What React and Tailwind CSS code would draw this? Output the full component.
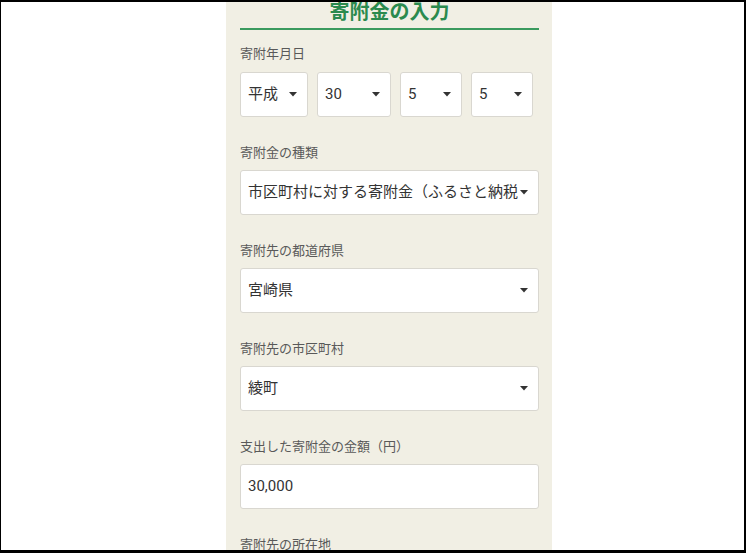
import React from 'react';

const font = { fontFamily: 'Roboto, "Noto Sans CJK JP", sans-serif' };

const Caret = () => (
  <svg width="8" height="5" viewBox="0 0 8 5" className="shrink-0 ml-[2px] mr-[10px]">
    <path d="M0 0h8L4 4.5z" fill="#333" />
  </svg>
);

const SelectBox = ({ value, className = '' }) => (
  <div className={`h-[45px] flex items-center bg-white border border-[#d9d7d0] rounded-[3px] ${className}`}>
    <span className="flex-1 min-w-0 overflow-hidden whitespace-nowrap pl-[7px] text-[15px] text-[#333]">{value}</span>
    <Caret />
  </div>
);

const Field = ({ label, children }) => (
  <div className="mt-[27px]">
    <div className="text-[13px] leading-[18px] text-[#595959] mb-[8px]">{label}</div>
    {children}
  </div>
);

const App = () => {
  // 寄附年月日のセレクト
  const dateParts = [
    { value: '平成', w: 'w-[68px]' },
    { value: '30', w: 'w-[74px]' },
    { value: '5', w: 'w-[62px]' },
    { value: '5', w: 'w-[62px]' },
  ];

  return (
    <div
      className="w-[746px] h-[553px] overflow-hidden bg-white border-l border-t-2 border-r-2 border-b-[3px] border-black flex"
      style={font}
    >
      <div className="ml-[225px] w-[326px] h-full bg-[#f1efe4] pl-[14px] pr-[13px] overflow-hidden">
        {/* Header */}
        <div className="text-center text-[20px] leading-[20px] font-bold text-[#2b8a4e] pb-[6px] border-b-2 border-[#3a9a5e]">
          寄附金の入力
        </div>

        {/* 寄附年月日 */}
        <div className="mt-[15px]">
          <div className="text-[13px] leading-[18px] text-[#595959] mb-[9px]">寄附年月日</div>
          <div className="flex gap-[9px]">
            {dateParts.map((p, i) => (
              <SelectBox key={i} value={p.value} className={p.w} />
            ))}
          </div>
        </div>

        <Field label="寄附金の種類">
          <SelectBox value="市区町村に対する寄附金（ふるさと納税）" />
        </Field>

        <Field label="寄附先の都道府県">
          <SelectBox value="宮崎県" />
        </Field>

        <Field label="寄附先の市区町村">
          <SelectBox value="綾町" />
        </Field>

        <Field label="支出した寄附金の金額（円）">
          <div className="h-[45px] flex items-center bg-white border border-[#d9d7d0] rounded-[3px] pl-[7px] text-[15px] text-[#333]">
            30,000
          </div>
        </Field>

        <Field label="寄附先の所在地">
          <div className="h-[45px] bg-white border border-[#d9d7d0] rounded-[3px]" />
        </Field>
      </div>
    </div>
  );
};

export default App;
